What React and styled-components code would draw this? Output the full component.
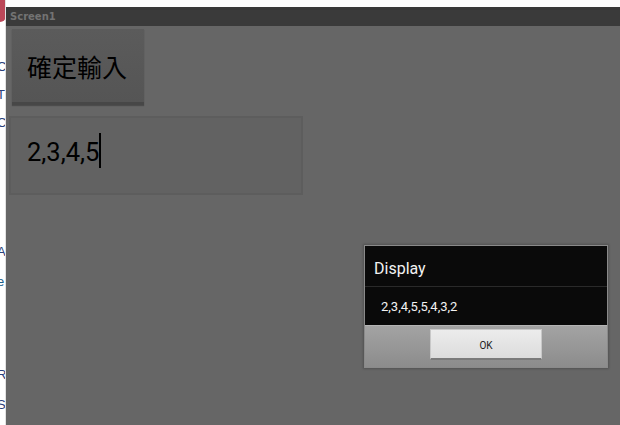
import React from 'react';
import styled, { createGlobalStyle } from 'styled-components';

const GlobalStyle = createGlobalStyle`
	html, body {
		margin: 0;
		padding: 0;
		background: #fff;
		overflow: hidden;
	}
	body {
		font-family: Roboto, "Noto Sans CJK TC", sans-serif;
	}
`;

const Page = styled.div`
	width: 620px;
	height: 425px;
	display: flex;
	position: relative;
	overflow: hidden;
`;

const Strip = styled.div`
	width: 6px;
	height: 100%;
	flex-shrink: 0;
	overflow: hidden;
	background: #fff;
	border-right: 1px solid #e2e2e2;
	box-sizing: border-box;
	display: flex;
	flex-direction: column;
`;

const StripMark = styled.div`
	width: 10px;
	height: 22px;
	margin-left: -4px;
	background: #b0283c;
	border-radius: 0 0 6px 0;
	opacity: 0.85;
`;

const StripLetter = styled.span`
	display: block;
	margin-top: ${(p) => p.$top}px;
	margin-left: -3px;
	height: 14px;
	line-height: 14px;
	font-size: 13px;
	font-family: "Liberation Sans", Arial, sans-serif;
	color: ${(p) => p.$color || '#2b3f7a'};
`;

const Screen = styled.div`
	flex: 1;
	display: flex;
	flex-direction: column;
	padding-top: 7px;
	background: #fff;
`;

const TitleBar = styled.div`
	height: 19px;
	background: #3a3a3a;
	display: flex;
	align-items: center;
	padding-left: 4px;
	font-family: "DejaVu Sans", sans-serif;
	font-weight: bold;
	font-size: 10px;
	color: #737373;
`;

const Content = styled.div`
	flex: 1;
	background: #666;
	display: flex;
	flex-direction: column;
	align-items: flex-start;
	padding-top: 3px;
`;

const ConfirmButton = styled.div`
	margin-left: 6px;
	width: 132px;
	height: 76px;
	box-sizing: border-box;
	background: linear-gradient(#5b5b5b, #555);
	border-bottom: 3px solid #474747;
	box-shadow: 0 1px 1px rgba(0, 0, 0, 0.25);
	display: flex;
	align-items: center;
	justify-content: center;
	padding-right: 2px;
	font-family: "Noto Sans CJK TC", sans-serif;
	font-size: 25px;
	color: #000;
`;

const TextBox = styled.div`
	margin-top: 11px;
	margin-left: 3px;
	width: 294px;
	height: 79px;
	box-sizing: border-box;
	background: #626262;
	border: 2px solid #5d5d5d;
	padding: 17px 0 0 16px;
	display: flex;
	align-items: flex-start;
	font-family: Roboto, sans-serif;
	font-size: 25.5px;
	line-height: 34px;
	color: #000;
`;

const Caret = styled.span`
	display: inline-block;
	width: 1.5px;
	height: 35px;
	margin-top: -2px;
	background: #000;
`;

const Dialog = styled.div`
	position: absolute;
	left: 364px;
	top: 245px;
	width: 244px;
	height: 123px;
	box-sizing: border-box;
	border: 1px solid #8a8a8a;
	box-shadow: 0 0 2px 1px rgba(0, 0, 0, 0.2);
	display: flex;
	flex-direction: column;
	background: #0a0a0a;
`;

const DialogTitle = styled.div`
	height: 41px;
	box-sizing: border-box;
	padding: 4px 0 0 9px;
	display: flex;
	align-items: center;
	border-bottom: 1px solid #2a2a2a;
	font-family: Roboto, sans-serif;
	font-size: 16px;
	color: #f2f2f2;
`;

const DialogMessage = styled.div`
	height: 38px;
	padding-left: 16px;
	display: flex;
	align-items: center;
	font-family: Roboto, sans-serif;
	font-size: 13px;
	color: #f2f2f2;
`;

const ButtonBar = styled.div`
	flex: 1;
	background: linear-gradient(#a3a3a3, #8c8c8c);
	border-top: 1px solid #b4b4b4;
	display: flex;
	justify-content: center;
	align-items: flex-start;
	padding-top: 3px;
`;

const OkButton = styled.div`
	width: 112px;
	height: 31px;
	box-sizing: border-box;
	background: linear-gradient(#ececec, #dcdcdc);
	border: 1px solid #c8c8c8;
	border-bottom: 2px solid #7a7a7a;
	display: flex;
	align-items: center;
	justify-content: center;
	padding-top: 2px;
	font-family: Roboto, sans-serif;
	font-size: 10px;
	color: #222;
`;

const letters = [
	{ ch: 'C', top: 38 },
	{ ch: 'T', top: 14 },
	{ ch: 'C', top: 14 },
	{ ch: 'A', top: 115 },
	{ ch: 'e', top: 16, color: '#1d5f8a' },
	{ ch: 'R', top: 79 },
	{ ch: 'S', top: 16 },
];

export default function App() {
	return (
		<>
			<GlobalStyle />
			<Page>
				<Strip>
					<StripMark />
					{letters.map((l, i) => (
						<StripLetter key={i} $top={l.top} $color={l.color}>
							{l.ch}
						</StripLetter>
					))}
				</Strip>
				<Screen>
					<TitleBar>Screen1</TitleBar>
					<Content>
						<ConfirmButton>確定輸入</ConfirmButton>
						<TextBox>
							2,3,4,5
							<Caret />
						</TextBox>
					</Content>
				</Screen>
				<Dialog>
					<DialogTitle>Display</DialogTitle>
					<DialogMessage>2,3,4,5,5,4,3,2</DialogMessage>
					<ButtonBar>
						<OkButton>OK</OkButton>
					</ButtonBar>
				</Dialog>
			</Page>
		</>
	);
}
